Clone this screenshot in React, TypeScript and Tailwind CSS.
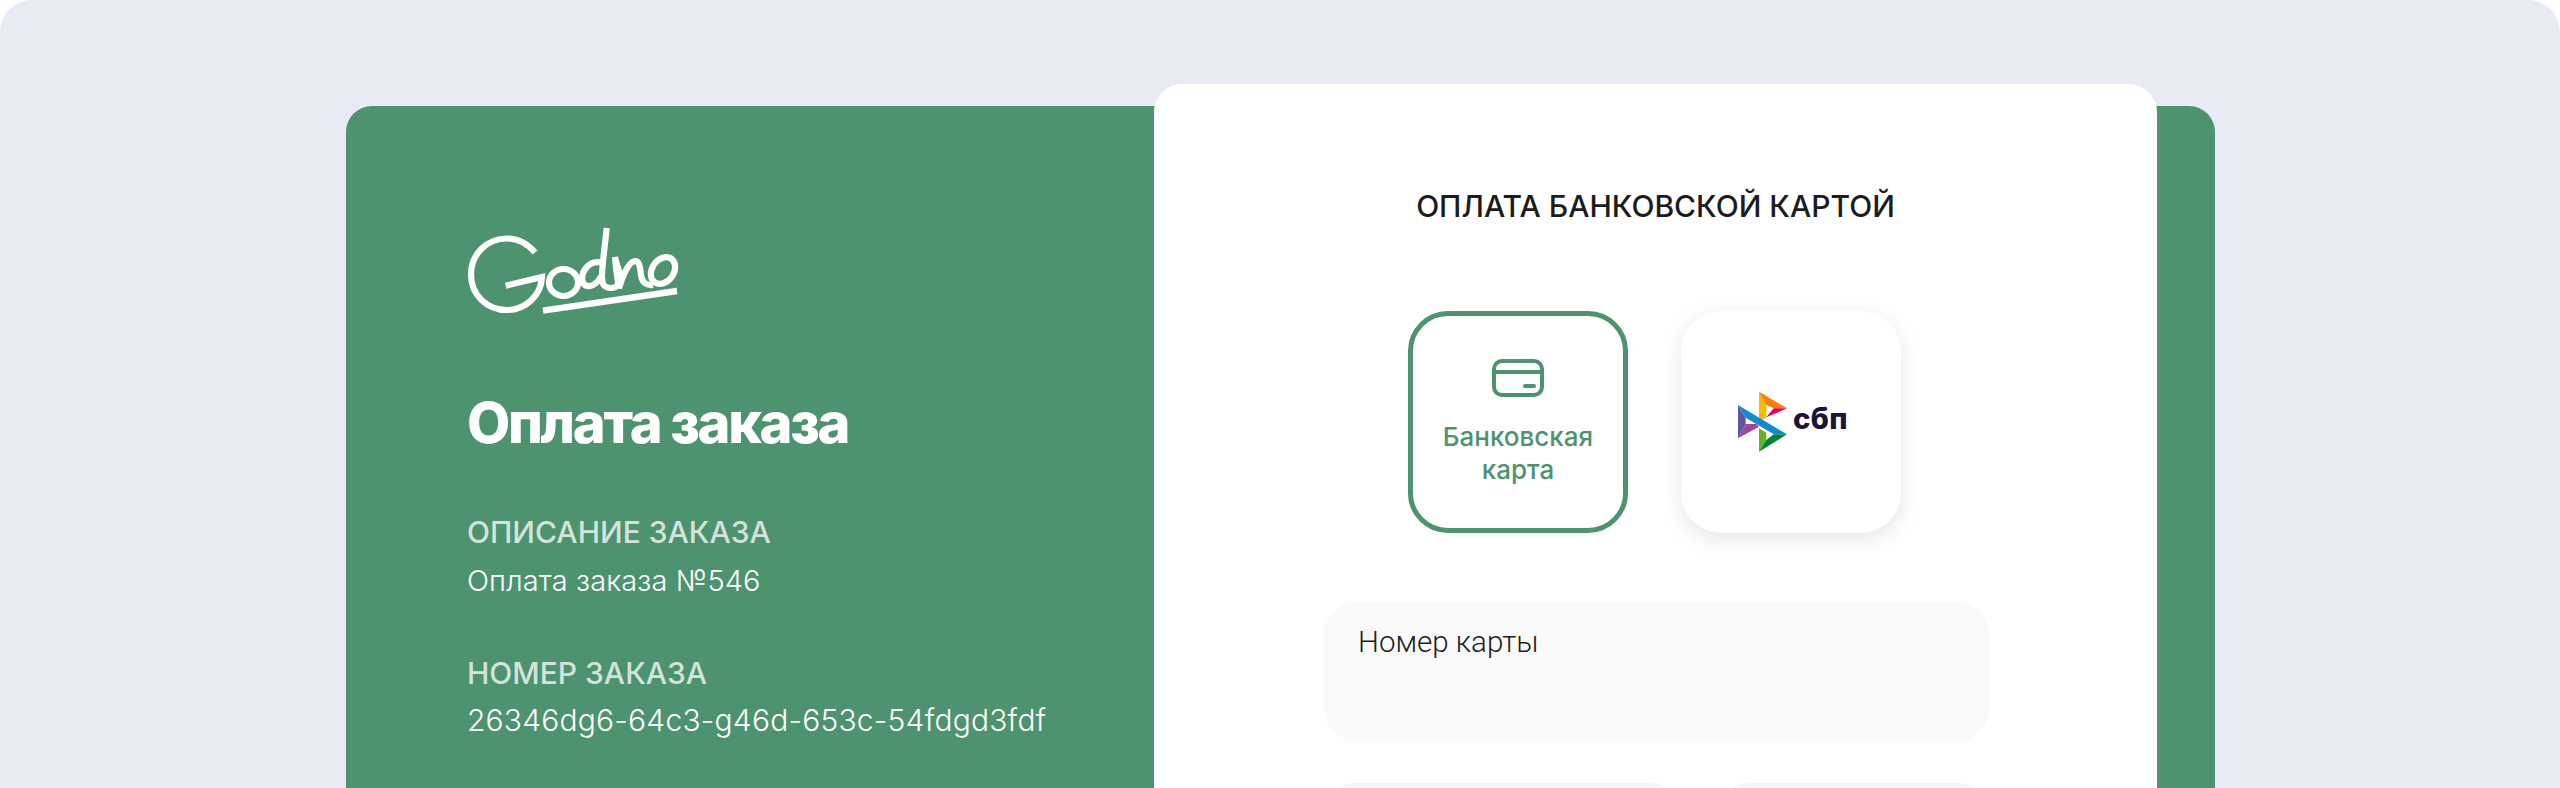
export default function App() {
  return (
    <div className="h-[788px] w-full overflow-hidden bg-white font-['Inter',sans-serif]">
      <div className="h-[820px] rounded-[32px] bg-[#e8ebf3] pl-[346px] pt-[106px]">
        <div className="flex h-[800px] w-[1869px] rounded-[26px] bg-[#4e936f]">
          <div className="w-[808px] shrink-0 pl-[121px] pt-[120px] text-white">
            <svg className="-ml-[1px] block" width="214" height="88" viewBox="466 226 214 88" fill="none" stroke="#fff" strokeWidth="6.2">
              <path d="M535 252.5C527 243 517 238.5 507 238.5C487 238.5 471 254 471 274.5C471 295 487 310 507 310C525 310 541 296 542 277L505.7 285.7" />
              <ellipse cx="563.5" cy="282.5" rx="14.5" ry="13.5" />
              <path d="M606.7 228C605 245 602.5 262 602 275C601.5 284 604 288 611 288C617 288 620 284 620 278C620 270 616 264 615 257C616 268 617 278 619 288C622 278 628 262 635 261C640 261 640 268 641 275C642 282 646 286 653 285" />
              <path d="M604 263C598 261 590 262 586 268C581 274 581 282 585 285C590 288 598 284 601 276" />
              <ellipse cx="663" cy="270.5" rx="10.8" ry="14.5" transform="rotate(35 663 270.5)" />
              <path d="M543 310.7L677 291" strokeWidth="6.4" />
            </svg>
            <h1 className="mt-[77px] text-[56px] font-extrabold leading-[64px] tracking-[-2.3px]">Оплата заказа</h1>
            <div className="mt-[59px] text-[30px] font-medium leading-[36px] text-white/75">ОПИСАНИЕ ЗАКАЗА</div>
            <div className="mt-[13px] text-[29px] font-light leading-[36px] tracking-[0.1px]">Оплата заказа №546</div>
            <div className="mt-[56px] text-[30px] font-medium leading-[36px] text-white/75">НОМЕР ЗАКАЗА</div>
            <div className="mt-[11px] text-[30px] font-light leading-[36px] tracking-[0.2px]">26346dg6-64c3-g46d-653c-54fdgd3fdf</div>
          </div>
          <div className="-mt-[22px] h-[800px] w-[1003px] shrink-0 rounded-[28px] bg-white">
            <div className="pt-[103px] text-center text-[30px] font-medium leading-[38px] text-[#1c1c1c]">ОПЛАТА БАНКОВСКОЙ КАРТОЙ</div>
            <div className="mt-[86px] flex justify-center gap-[53px] pr-[2px]">
              <div className="flex h-[222px] w-[220px] flex-col items-center rounded-[40px] border-[5px] border-[#4e936f] pt-[43px] text-[#4e936f]">
                <svg width="52" height="38" viewBox="0 0 52 38" fill="none" stroke="#4e936f" strokeWidth="4">
                  <rect x="2" y="2" width="48" height="34" rx="8" />
                  <path d="M2 13H50" />
                  <path d="M33 27H42" strokeLinecap="round" />
                </svg>
                <div className="mt-[23px] text-center text-[26px] font-medium leading-[33px]">Банковская<br />карта</div>
              </div>
              <div className="flex h-[222px] w-[220px] items-center justify-center rounded-[40px] bg-white pl-[3px] shadow-[0_6px_20px_rgba(0,0,0,0.1)]">
                <svg width="112" height="62" viewBox="112 58 336 186">
                  <polygon points="115,100 138,138 138,157 115,200" fill="#5b57a2" />
                  <polygon points="115,200 138,157 170,157 178,165" fill="#9a4a9c" />
                  <polygon points="178,60 200,100 200,137 178,150" fill="#fbb800" />
                  <polygon points="178,60 262,110 222,110 200,100" fill="#f58009" />
                  <polygon points="200,137 222,110 262,110" fill="#e5005c" />
                  <polygon points="178,240 178,170 200,183 200,205" fill="#63b61f" />
                  <polygon points="178,240 200,205 222,188 262,188" fill="#04843a" />
                  <polygon points="115,100 262,188 222,188 138,138" fill="#1389d2" />
                  <text x="280" y="172" fontFamily="Inter, sans-serif" fontWeight="800" fontSize="88" letterSpacing="1" fill="#1a1438">сбп</text>
                </svg>
              </div>
            </div>
            <div className="ml-[170px] mt-[69px] h-[139px] w-[665px] rounded-[32px] bg-[#fafafa] pl-[34px] pt-[22px] font-['Roboto',sans-serif] text-[29.5px] font-light leading-[36px] text-[#1c1c1c]">Номер карты</div>
            <div className="ml-[170px] mt-[42px] flex w-[665px] gap-[35px]">
              <div className="h-[139px] w-[358px] rounded-[32px] bg-[#f5f5f5]" />
              <div className="h-[139px] w-[272px] rounded-[32px] bg-[#f5f5f5]" />
            </div>
          </div>
        </div>
      </div>
    </div>
  );
}
